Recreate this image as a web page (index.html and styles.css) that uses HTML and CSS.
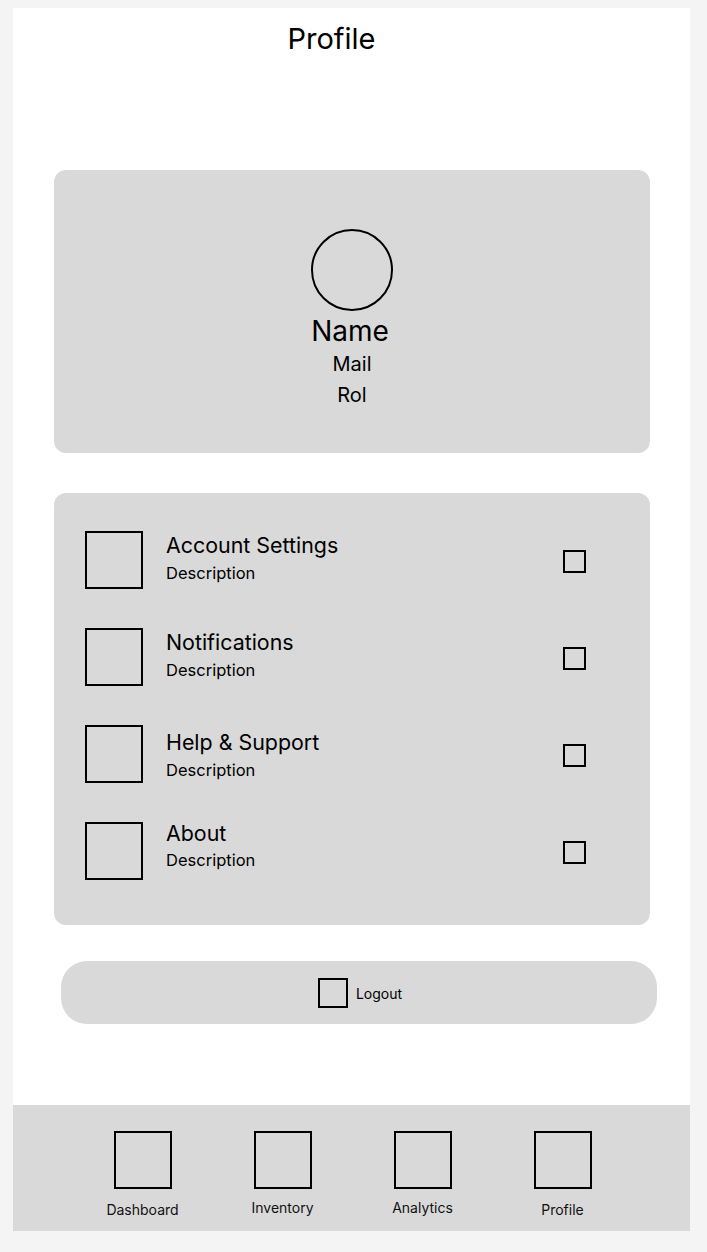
FILE: index.html
```html
<!DOCTYPE html>
<html lang="en">
<head>
<meta charset="utf-8">
<title>Profile</title>
<link rel="stylesheet" href="styles.css">
</head>
<body>
<div class="frame">
  <main class="content">
    <h1 class="page-title">Profile</h1>

    <section class="card profile-card">
      <div class="avatar"></div>
      <div class="profile-name">Name</div>
      <div class="profile-meta">Mail</div>
      <div class="profile-meta">Rol</div>
    </section>

    <section class="card menu-card">
      <div class="menu-row">
        <div class="menu-icon"></div>
        <div class="menu-text">
          <div class="menu-title">Account Settings</div>
          <div class="menu-desc">Description</div>
        </div>
        <div class="menu-check"></div>
      </div>
      <div class="menu-row">
        <div class="menu-icon"></div>
        <div class="menu-text">
          <div class="menu-title">Notifications</div>
          <div class="menu-desc">Description</div>
        </div>
        <div class="menu-check"></div>
      </div>
      <div class="menu-row menu-row--low">
        <div class="menu-icon"></div>
        <div class="menu-text">
          <div class="menu-title">Help &amp; Support</div>
          <div class="menu-desc">Description</div>
        </div>
        <div class="menu-check"></div>
      </div>
      <div class="menu-row menu-row--high">
        <div class="menu-icon"></div>
        <div class="menu-text">
          <div class="menu-title">About</div>
          <div class="menu-desc">Description</div>
        </div>
        <div class="menu-check"></div>
      </div>
    </section>

    <button class="logout">
      <span class="logout-icon"></span>
      <span class="logout-label">Logout</span>
    </button>
  </main>

  <nav class="tabbar">
    <div class="tab tab--low">
      <div class="tab-icon"></div>
      <div class="tab-label">Dashboard</div>
    </div>
    <div class="tab">
      <div class="tab-icon"></div>
      <div class="tab-label">Inventory</div>
    </div>
    <div class="tab">
      <div class="tab-icon"></div>
      <div class="tab-label">Analytics</div>
    </div>
    <div class="tab tab--low">
      <div class="tab-icon"></div>
      <div class="tab-label">Profile</div>
    </div>
  </nav>
</div>
</body>
</html>
```

FILE: styles.css
```css
* {
  box-sizing: border-box;
}

html, body {
  margin: 0;
  padding: 0;
}

body {
  background: #f4f4f4;
  font-family: Inter, "Noto Sans", sans-serif;
  color: #000;
}

.frame {
  margin: 8px 17px 0 13px;
  width: 677px;
  height: 1223px;
  background: #ffffff;
  display: flex;
  flex-direction: column;
}

.content {
  flex: 1;
  display: flex;
  flex-direction: column;
}

.page-title {
  margin: 0;
  padding: 13px 40px 0 0;
  font-size: 29px;
  font-weight: 400;
  line-height: 35px;
  text-align: center;
}

.card {
  background: #d9d9d9;
  border-radius: 12px;
  width: 596px;
  margin-left: 41px;
}

.profile-card {
  margin-top: 114px;
  height: 283px;
  padding-top: 59px;
  display: flex;
  flex-direction: column;
  align-items: center;
}

.avatar {
  width: 82px;
  height: 82px;
  border: 2px solid #000;
  border-radius: 50%;
}

.profile-name {
  font-size: 28px;
  line-height: 36px;
  margin-top: 2px;
  margin-right: 4px;
}

.profile-meta {
  font-size: 20px;
  line-height: 31px;
}

.menu-card {
  margin-top: 40px;
  padding: 38px 64px 45px 31px;
  display: flex;
  flex-direction: column;
  gap: 39px;
}

.menu-row {
  display: flex;
  align-items: flex-start;
  height: 58px;
}

.menu-icon {
  width: 58px;
  height: 58px;
  border: 2px solid #000;
  flex: none;
}

.menu-text {
  flex: 1;
  margin-left: 23px;
  padding-top: 1px;
}

.menu-row--low .menu-text {
  padding-top: 4px;
}

.menu-row--high .menu-text {
  padding-top: 0;
  margin-top: -2px;
}

.menu-title {
  font-size: 21.4px;
  line-height: 26px;
}

.menu-desc {
  font-size: 16.5px;
  line-height: 30px;
}

.menu-row--high .menu-desc {
  line-height: 28px;
}

.menu-check {
  width: 23px;
  height: 23px;
  border: 2px solid #000;
  flex: none;
  align-self: center;
  margin-top: 3px;
}

.logout {
  margin: 36px 0 0 48px;
  width: 596px;
  height: 63px;
  border: none;
  border-radius: 26px;
  background: #d9d9d9;
  display: flex;
  align-items: center;
  justify-content: center;
  gap: 8px;
  padding: 0 0 0 2px;
  font-family: Inter, "Noto Sans", sans-serif;
  color: #000;
  cursor: pointer;
}

.logout-icon {
  width: 30px;
  height: 30px;
  border: 2px solid #000;
  display: block;
}

.logout-label {
  font-size: 14px;
  line-height: 17px;
  margin-top: 2px;
}

.tabbar {
  height: 126px;
  background: #d9d9d9;
  display: grid;
  grid-template-columns: repeat(4, 140px);
  justify-content: center;
  padding: 26px 0 0 2px;
}

.tab {
  display: flex;
  flex-direction: column;
  align-items: center;
}

.tab-icon {
  width: 58px;
  height: 58px;
  border: 2px solid #000;
}

.tab-label {
  margin-top: 10px;
  font-size: 14px;
  line-height: 17px;
  color: #111;
}

.tab--low .tab-label {
  margin-top: 12px;
}
```
